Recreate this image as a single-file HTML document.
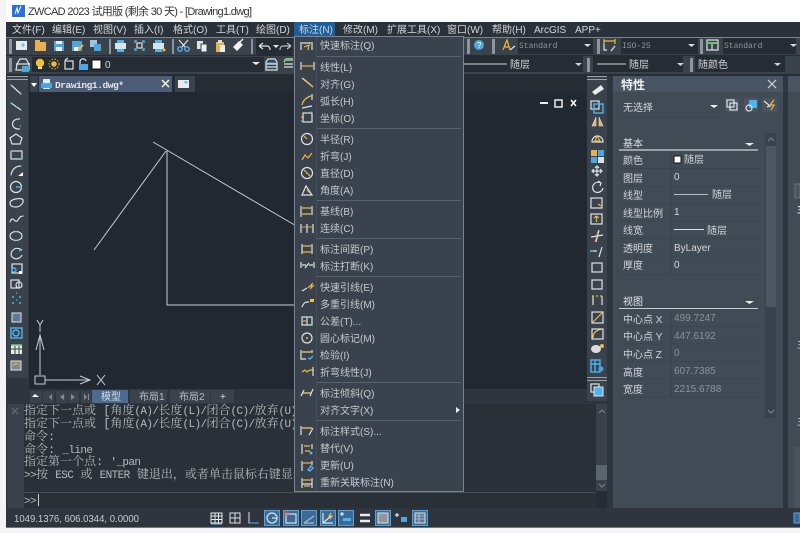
<!DOCTYPE html>
<html><head><meta charset="utf-8"><title>ZWCAD 2023</title>
<style>
html,body{margin:0;padding:0;background:#f4f4f4;overflow:hidden}
svg{display:block;position:absolute;left:0;top:0}
text{font-family:"Liberation Sans","Noto Sans CJK SC",sans-serif;font-size:10px;fill:#d2d6da}
.w{fill:#e8eaec}.m text{fill:#c6cacf}
.mono{font-family:"Liberation Mono","Noto Serif CJK SC",serif;font-size:12px;fill:#b6babe}
.mono tspan{font-size:11px;letter-spacing:-.6px}
.st{font-family:"Liberation Sans",sans-serif;font-size:10px;fill:#c8ccce}
.cb{font-family:"Liberation Mono",serif;font-size:8px;fill:#8f959b}
.dim{fill:#8b9299}
.ic{fill:none;stroke:#dfe3e6;stroke-width:1.2}
.y{fill:none;stroke:#f0b93a;stroke-width:1.2}
.b{fill:none;stroke:#4db4f0;stroke-width:1.4}
.dot{stroke:#353e48;stroke-width:1;stroke-dasharray:1 1}
</style></head><body>
<svg width="800" height="533" viewBox="0 0 800 533" xmlns="http://www.w3.org/2000/svg">
<!-- frame -->
<rect width="800" height="533" fill="#f4f4f4"/>
<rect x="6" y="0" width="794" height="22" fill="#fff"/>
<rect x="6" y="22" width="794" height="506" fill="#2e353f"/>
<rect x="6" y="527" width="794" height="1" fill="#777"/>
<!-- title -->
<rect x="12" y="5" width="13" height="12" fill="#2a6fe0"/>
<path d="M15 14l2-6 1 5 3-7" stroke="#fff" fill="none"/>
<text x="28" y="15" style="font-size:11px;fill:#333" textLength="224">ZWCAD 2023 试用版 (剩余 30 天) - [Drawing1.dwg]</text>
<!-- menu bar -->
<rect x="6" y="22" width="794" height="15" fill="#2b3139"/>
<rect x="294" y="22" width="41" height="15" fill="#1d5f9c"/>
<g>
<text x="12" y="33">文件(F)</text><text x="52" y="33">编辑(E)</text><text x="93" y="33">视图(V)</text><text x="134" y="33">插入(I)</text><text x="173" y="33">格式(O)</text><text x="216" y="33">工具(T)</text><text x="256" y="33">绘图(D)</text><text x="299" y="33">标注(N)</text><text x="343" y="33">修改(M)</text><text x="387" y="33">扩展工具(X)</text><text x="447" y="33">窗口(W)</text><text x="492" y="33">帮助(H)</text><text x="534" y="33">ArcGIS</text><text x="575" y="33">APP+</text>
</g>
<!-- toolbars -->
<rect x="6" y="37" width="794" height="1" fill="#7d858c"/>
<rect x="6" y="38" width="794" height="17" fill="#3a424c"/>
<rect x="6" y="55" width="794" height="1" fill="#262c33"/>
<rect x="6" y="56" width="794" height="18" fill="#3a424c"/>
<rect x="6" y="74" width="794" height="2" fill="#262c33"/>
<g fill="#8e969d">
<rect x="9" y="39" width="3" height="15"/><rect x="9" y="58" width="3" height="14"/>
<rect x="109" y="39" width="2" height="15"/><rect x="172" y="39" width="2" height="15"/><rect x="251" y="39" width="2" height="15"/>
<rect x="467" y="39" width="3" height="15"/><rect x="492" y="39" width="3" height="15"/><rect x="597" y="39" width="3" height="15"/><rect x="700" y="39" width="3" height="15"/>
<rect x="587" y="58" width="3" height="14"/><rect x="690" y="58" width="3" height="14"/>
</g>
<!-- toolbar 1 icons -->
<rect x="16" y="41" width="11" height="9" fill="#e8eaec"/><path d="M21 45h4M23 43v4" stroke="#4db4f0"/>
<rect x="35" y="42" width="11" height="9" fill="#e8b050"/><rect x="35" y="40" width="5" height="3" fill="#e8b050"/>
<rect x="54" y="41" width="10" height="10" fill="#4da6e0"/><rect x="56" y="41" width="6" height="3" fill="#eef"/><rect x="56" y="47" width="6" height="4" fill="#eef"/>
<rect x="72" y="41" width="10" height="10" fill="#4da6e0"/><rect x="74" y="47" width="5" height="4" fill="#eef"/><path d="M78 50l5-5" stroke="#f0b93a" stroke-width="2"/>
<rect x="90" y="40" width="7" height="7" fill="#9fc4de"/><rect x="94" y="44" width="7" height="7" fill="#4da6e0"/>
<rect x="115" y="43" width="11" height="6" fill="#dfe3e6"/><rect x="117" y="40" width="7" height="3" fill="#4db4f0"/><rect x="117" y="49" width="7" height="3" fill="#4db4f0"/>
<path d="M135 43v-2h2M142 41h2v2M144 48v2h-2M137 50h-2v-2" class="b"/><rect x="137" y="43" width="5" height="5" class="ic"/>
<rect x="153" y="43" width="11" height="6" fill="#dfe3e6"/><rect x="155" y="40" width="7" height="3" fill="#4db4f0"/><rect x="155" y="49" width="7" height="3" fill="#4db4f0"/><circle cx="164" cy="50" r="1.5" fill="#f0b93a"/>
<path d="M179 40l6 7M188 40l-6 7" class="ic"/><circle cx="180" cy="49" r="2.2" class="b"/><circle cx="187" cy="49" r="2.2" class="b"/>
<rect x="197" y="41" width="6" height="8" fill="#dfe3e6"/><rect x="201" y="44" width="6" height="8" fill="#eef0f2" stroke="#3a424c"/>
<rect x="216" y="42" width="8" height="10" fill="#e8b050"/><rect x="218" y="40" width="4" height="3" fill="#ddd"/><rect x="220" y="45" width="5" height="7" fill="#eee"/>
<path d="M234 47l5-5 3 3-5 5zM240 42l3-3" fill="#f0f2f4" stroke="#f0f2f4" stroke-width="1.4"/>
<rect x="256" y="38" width="37" height="17" fill="#262c33"/>
<path d="M259 46h8c2 0 3 2 3 4M259 46l4-3M259 46l4 3" class="ic" stroke-width="1.6"/><path d="M273 45h6l-3 3z" fill="#e8eaec"/><path d="M291 46h-8c-2 0-3 2-3 4M291 46l-4-3M291 46l-4 3" class="ic" stroke-width="1.6" opacity=".8"/>
<rect x="464" y="38" width="3" height="17" fill="#3a424c"/>
<circle cx="479" cy="45" r="5" fill="#4da6e0"/><text x="477" y="48" style="font-size:8px;fill:#fff">?</text>
<path d="M503 50l4-10 3 10M505 47h4" class="y"/><path d="M510 50l5-4" class="ic"/>
<rect x="518" y="38" width="75" height="16" fill="#262c33"/><text x="519" y="48" class="cb">Standard</text><path d="M584 44h7l-3.5 3z" fill="#d8dcdf"/>
<path d="M604 41h11M604 39v5M615 39v5" class="y"/><path d="M604 44v6h3M615 46l-4 5" class="ic"/>
<rect x="621" y="38" width="77" height="16" fill="#262c33"/><text x="622" y="48" class="cb">ISO-25</text><path d="M688 44h7l-3.5 3z" fill="#d8dcdf"/>
<rect x="707" y="40" width="11" height="10" class="ic"/><path d="M707 43h11" stroke="#6fc26a" stroke-width="2"/><path d="M712 44v6" class="ic"/>
<rect x="723" y="38" width="73" height="16" fill="#262c33"/><text x="724" y="48" class="cb">Standard</text><path d="M790 44h7l-3.5 3z" fill="#d8dcdf"/>
<!-- toolbar 2 -->
<path d="M16 64h14M17 64l3-5h6l3 5v6H16z" class="ic"/><rect x="22" y="66" width="7" height="6" fill="#4da6e0"/>
<rect x="32" y="57" width="232" height="15" fill="#262c33"/>
<circle cx="40" cy="63" r="4.2" fill="#f5c030"/><rect x="38" y="67" width="4" height="2" fill="#ddd"/>
<circle cx="54" cy="64" r="2.8" fill="#f0b93a"/><circle cx="54" cy="64" r="5" fill="none" stroke="#f0b93a" stroke-dasharray="1.5 1.5"/>
<rect x="65" y="61" width="8" height="8" class="ic"/><path d="M65 60l3-2" class="ic"/>
<rect x="79" y="64" width="9" height="6" fill="#4da6e0"/><path d="M80 64v-2c0-4 5-4 6-1" class="ic"/>
<rect x="92" y="60" width="9" height="9" fill="#fff" stroke="#111"/><text x="105" y="68" style="font-size:10px">0</text>
<path d="M252 62h8l-4 3z" fill="#e8eaec"/>
<path d="M266 62l2-3h7l2 3v8h-11zM266 64h11M266 67h11" class="ic"/><path d="M266 63h11" stroke="#4db4f0"/>
<path d="M284 62l2-3h7" class="ic"/><path d="M284 64h9M284 67h9" class="ic"/><path d="M284 60h9" stroke="#6fc26a" stroke-width="2"/>
<rect x="464" y="56" width="119" height="16" fill="#262c33"/><path d="M464 64h43" stroke="#cfd3d6"/><text x="510" y="68">随层</text><path d="M575 63h7l-3.5 3z" fill="#cfd3d6"/>
<rect x="593" y="56" width="90" height="16" fill="#262c33"/><path d="M597 64h29" stroke="#cfd3d6"/><text x="629" y="68">随层</text><path d="M677 63h7l-3.5 3z" fill="#cfd3d6"/>
<rect x="695" y="56" width="90" height="16" fill="#262c33"/><text x="698" y="68">随颜色</text><path d="M774 63h7l-3.5 3z" fill="#cfd3d6"/>
<!-- doc tabs row -->
<rect x="29" y="76" width="558" height="17" fill="#262c33"/>
<rect x="30" y="76" width="8" height="16" fill="#3a424c"/><path d="M31 83h6l-3 4z" fill="#fff"/>
<rect x="39" y="76" width="133" height="16" fill="#4d5d78"/>
<rect x="43" y="79" width="7" height="10" fill="#e8eaec"/><rect x="41" y="83" width="11" height="5" fill="#4da6e0"/>
<text x="55" y="88" style="font-family:'Liberation Mono',serif;font-size:9.5px;font-weight:bold;fill:#e2e5e8" textLength="69">Drawing1.dwg*</text>
<path d="M162 80l7 7M169 80l-7 7" stroke="#fff" stroke-width="1.4"/>
<rect x="175" y="76" width="20" height="16" fill="#3a424c"/><rect x="178" y="80" width="11" height="8" fill="#e8eaec"/><path d="M184 82h4M186 81v3" stroke="#4db4f0"/>
<!-- canvas -->
<rect x="29" y="92" width="558" height="297" fill="#222831"/>
<g stroke="#c8ccce" fill="none" stroke-width="1">
<path d="M153 142L310 234"/>
<path d="M166 151L94 250"/>
<path d="M167 151V305H297"/>
<path d="M40 375V335M36 350l4-15 4 15"/>
<path d="M45 380H90M80 376l10 4-10 4"/>
<rect x="35" y="376" width="10" height="8"/>
<path d="M37 320l3 5 3-5M40 325v7"/><path d="M97 375l8 10M105 375l-8 10"/>
</g>
<path d="M540 103h8" stroke="#e8eaec" stroke-width="2"/><rect x="555" y="100" width="7" height="7" fill="none" stroke="#e8eaec" stroke-width="1.5"/><path d="M571 100l5 6M576 100l-5 6" stroke="#fff" stroke-width="1.5"/>
<!-- left toolbar -->
<rect x="7" y="76" width="21" height="302" fill="#3a424c"/>
<rect x="7" y="76" width="21" height="1" fill="#9aa1a7"/><rect x="7" y="79" width="21" height="1" fill="#9aa1a7"/>
<rect x="6" y="378" width="23" height="26" fill="#2e353f"/>
<g>
<path d="M11 85L21 94" class="ic"/><path d="M11 85h.1M21 94h.1" class="b" stroke-width="2.5" stroke-linecap="round"/>
<path d="M11 103L21 110" class="ic"/><path d="M11 103h.1M16 107h.1M21 110h.1" class="b" stroke-width="2.5" stroke-linecap="round"/>
<path d="M20 119c-10-1-10 11 0 10" class="ic"/><path d="M20 126h1" class="b"/>
<path d="M16 134l6 4-2 6h-8l-2-6z" class="ic"/>
<rect x="11" y="151" width="11" height="8" class="ic"/><path d="M11 151h.1M22 159h.1" class="b" stroke-width="2.5" stroke-linecap="round"/>
<path d="M11 175c1-6 5-9 10-9" class="ic"/><path d="M11 175h.1M21 166h.1" class="b" stroke-width="2.5" stroke-linecap="round"/><path d="M18 176l5-4v4z" fill="#fff" stroke="none"/>
<circle cx="16" cy="187" r="5.5" class="ic"/><path d="M16 187h6" class="b"/>
<path d="M10 203c0-4 12-6 13-3s-3 7-7 7-6-1-6-4z" class="ic"/>
<path d="M10 222c3-8 5 3 8-2s3-3 5-4" class="ic"/><path d="M10 222h.1M23 216h.1" class="b" stroke-width="2" stroke-linecap="round"/>
<ellipse cx="16" cy="236" rx="6" ry="4.5" class="ic"/><path d="M10 236h.1M22 236h.1M16 231.5h.1M16 240.5h.1" class="b" stroke-width="2" stroke-linecap="round"/>
<path d="M22 250c-8-5-13 3-10 7 3 3 8 2 10-2" class="ic"/><path d="M22 250l-3 1" class="b"/>
<rect x="12" y="264" width="10" height="9" class="ic"/><circle cx="14" cy="270" r="2" class="b"/><rect x="19" y="271" width="3" height="3" fill="#fff" stroke="none"/>
<rect x="11" y="280" width="8" height="8" class="ic"/><circle cx="19" cy="285" r="3" class="ic"/>
<path d="M12 297h2M19 297h2M16 293h1M16 300h1M12 303h2M19 303h2" class="b"/>
<rect x="12" y="313" width="9" height="9" fill="#5f7a96" stroke="#dfe3e6" stroke-width="1"/>
<rect x="11" y="328" width="11" height="10" class="b"/><circle cx="16" cy="333" r="3" class="b"/>
</g>
<rect x="11" y="345" width="11" height="9" fill="#e8eaec"/><path d="M11 345h11" stroke="#6fc26a" stroke-width="1.5"/><path d="M11 349h11M15 346v8M19 346v8" stroke="#3a424c"/>
<rect x="11" y="361" width="10" height="9" fill="#7c8790" stroke="#dfe3e6"/><path d="M13 366l3-3 3 2" stroke="#f0b93a" fill="none"/>
<!-- layout tabs -->
<rect x="29" y="389" width="558" height="15" fill="#2e353f"/>
<rect x="30" y="391" width="12" height="12" fill="#3a424c"/><path d="M32 397l3-3 4 3z" fill="#fff"/>
<g fill="#3a424c"><rect x="43" y="391" width="11" height="12"/><rect x="56" y="391" width="11" height="12"/><rect x="68" y="391" width="11" height="12"/><rect x="81" y="391" width="10" height="12"/></g>
<g fill="#838a90"><path d="M47 394v6M52 394l-3 3 3 3zM64 394l-4 3 4 3zM71 394l4 3-4 3zM84 394l3 3-3 3zM88 394h1v6h-1z"/></g>
<rect x="92" y="390" width="36" height="13" fill="#4d6a90"/><text x="101" y="400" style="fill:#d8dcdf">模型</text>
<rect x="130" y="390" width="37" height="13" fill="#3a424c"/><text x="139" y="400" style="fill:#b9bdc1">布局1</text>
<rect x="170" y="390" width="40" height="13" fill="#3a424c"/><text x="179" y="400" style="fill:#b9bdc1">布局2</text>
<rect x="211" y="390" width="23" height="13" fill="#3a424c"/><text x="220" y="400" style="fill:#d8dcdf">+</text>
<!-- command -->
<rect x="6" y="404" width="590" height="104" fill="#2a3038"/>
<rect x="7" y="404" width="17" height="104" fill="#39424c"/>
<path d="M12 408l6 6M18 408l-6 6" stroke="#5d666e" stroke-width="1.5"/>
<rect x="24" y="492" width="572" height="1" fill="#454e58"/>
<g>
<text class="mono" x="24" y="414">指定下一点或 [角度<tspan>(A)/</tspan>长度<tspan>(L)/</tspan>闭合<tspan>(C)/</tspan>放弃<tspan>(U)</tspan></text>
<text class="mono" x="24" y="427">指定下一点或 [角度<tspan>(A)/</tspan>长度<tspan>(L)/</tspan>闭合<tspan>(C)/</tspan>放弃<tspan>(U)</tspan></text>
<text class="mono" x="24" y="440">命令:</text>
<text class="mono" x="24" y="453">命令: <tspan>_line</tspan></text>
<text class="mono" x="24" y="465">指定第一个点: <tspan>'_pan</tspan></text>
<text class="mono" x="24" y="478"><tspan>&gt;&gt;</tspan>按 <tspan>ESC</tspan> 或 <tspan>ENTER</tspan> 键退出，或者单击鼠标右键显示快捷菜单。</text>
<text class="mono" x="24" y="504"><tspan>&gt;&gt;</tspan></text>
</g>
<rect x="38" y="494" width="1" height="12" fill="#c8ccce"/>
<rect x="596" y="404" width="11" height="87" fill="#39424c"/><rect x="596" y="465" width="11" height="15" fill="#5b656d"/>
<path d="M599 413l3-3 3 3M599 484l3 3 3-3" stroke="#7d858c" fill="none"/>
<rect x="596" y="491" width="11" height="17" fill="#262c33"/>
<!-- right toolbar -->
<rect x="587" y="76" width="20" height="325" fill="#3a424c"/>
<rect x="587" y="76" width="20" height="1" fill="#9aa1a7"/><rect x="587" y="79" width="20" height="1" fill="#9aa1a7"/>
<rect x="587" y="377" width="20" height="1" fill="#9aa1a7"/><rect x="587" y="380" width="20" height="1" fill="#9aa1a7"/>
<g>
<path d="M592 92l9-7 3 4-9 6z" fill="#e8eaec"/>
<rect x="591" y="101" width="8" height="8" class="ic"/><rect x="594" y="104" width="9" height="9" class="b"/>
<path d="M596 117l-4 9h4zM599 117l4 9h-4z" fill="#e8b050" stroke="#dfe3e6" stroke-width=".6"/>
<path d="M592 142c0-8 11-8 11 0z" class="ic"/><path d="M597 136l3 5h-5z" class="y"/>
<rect x="591" y="150" width="6" height="6" fill="#e8b050"/><rect x="598" y="150" width="6" height="6" fill="#4da6e0"/><rect x="591" y="157" width="6" height="6" fill="#4da6e0"/><rect x="598" y="157" width="6" height="6" fill="#dfe3e6"/>
<path d="M597 166v10M592 171h10M595 168l2-2 2 2M595 174l2 2 2-2M594 169l-2 2 2 2M600 169l2 2-2 2" class="ic"/>
<path d="M601 183c-6-3-11 4-7 8 3 3 8 1 9-3M598 181l3 2-1 3" class="ic"/>
<rect x="591" y="198" width="11" height="10" class="ic"/><path d="M598 204l3 2" class="y"/>
<rect x="591" y="214" width="11" height="10" class="ic"/><path d="M596.5 222v-6M594 218l2.5-2 2.500 2" class="y"/>
<path d="M591 237l12-2M599 230l-3 12" class="ic"/><path d="M598 231l-3 11" class="y" opacity=".6"/>
<path d="M590 251h7M602 247l-3 10" class="ic"/><path d="M590 251h3" class="b"/>
<rect x="592" y="263" width="10" height="9" class="ic"/>
<rect x="592" y="280" width="10" height="9" class="ic"/><path d="M594 280h.1M600 280h.1" class="b" stroke-width="2"/>
<path d="M593 305v-9M602 305v-9" class="ic"/><path d="M592 296h11" class="y" stroke-dasharray="2 2"/>
<rect x="592" y="312" width="11" height="11" class="ic"/><path d="M593 322l9-9" class="y"/>
<path d="M593 338c0-5 3-8 9-9" class="y"/><rect x="592" y="329" width="11" height="10" class="ic"/>
<ellipse cx="596" cy="349" rx="5" ry="4" fill="#d8dcdf"/><circle cx="602" cy="346" r="2" fill="#f0b93a"/>
<rect x="591" y="360" width="9" height="12" class="b"/><path d="M591 364h9M595 360v12" class="b" stroke-width="1"/><circle cx="601" cy="369" r="2.5" fill="#4da6e0"/>
<rect x="591" y="384" width="8" height="8" class="ic"/><rect x="594" y="387" width="9" height="9" fill="#4db4f0" stroke="#dfe3e6"/>
</g>
<!-- properties panel -->
<rect x="613" y="76" width="170" height="432" fill="#414b56"/>
<rect x="613" y="76" width="170" height="16" fill="#4a5564"/>
<text x="621" y="89" style="font-size:12px;font-weight:bold;fill:#f0f2f4">特性</text>
<path d="M768 80l8 8M776 80l-8 8" stroke="#d8dcdf" stroke-width="1.1"/>
<text x="623" y="111">无选择</text>
<path d="M710 105h8l-4 3z" fill="#f0f2f4"/>
<rect x="725" y="98" width="14" height="14" fill="#4a5460"/><rect x="727" y="100" width="7" height="7" class="ic"/><rect x="730" y="103" width="7" height="7" class="ic"/>
<rect x="744" y="98" width="14" height="14" fill="#4a5460"/><rect x="749" y="100" width="8" height="8" fill="#4db4f0"/><circle cx="749" cy="108" r="3" class="ic"/>
<rect x="762" y="98" width="15" height="14" fill="#4a5460"/><path d="M764 101l6 5-3 1" class="ic"/><path d="M774 100l-4 5h4l-3 5" class="y"/>
<path d="M620 117H720" class="dot"/>
<text x="623" y="147" style="fill:#dfe3e6">基本</text><path d="M745 143h9l-4.5 3z" fill="#e8eaec"/><rect x="619" y="149" width="139" height="2" fill="#9aa1a7"/>
<g>
<text x="623" y="164">颜色</text><text x="623" y="182">图层</text><text x="623" y="199">线型</text><text x="623" y="217">线型比例</text><text x="623" y="234">线宽</text><text x="623" y="252">透明度</text><text x="623" y="269">厚度</text>
<rect x="674" y="156" width="7" height="7" fill="#fff" stroke="#111"/><text x="684" y="163">随层</text>
<text x="674" y="180">0</text>
<path d="M674 194.5h34" stroke="#b9bdc1"/><text x="712" y="198">随层</text>
<text x="674" y="215">1</text>
<path d="M674 229.5h30" stroke="#dfe3e6"/><text x="707" y="234">随层</text>
<text x="674" y="251">ByLayer</text>
<text x="674" y="268">0</text>
</g>
<path d="M620 168.5h139M620 186h139M620 203.5h139M620 221h139M620 238.5h139M620 256h139M620 274h139" class="dot"/>
<path d="M671 152v122" stroke="#38414a"/>
<text x="623" y="305" style="fill:#dfe3e6">视图</text><path d="M745 301h9l-4.5 3z" fill="#e8eaec"/><rect x="619" y="308" width="139" height="1" fill="#c8ccce"/>
<g>
<text x="623" y="323">中心点 X</text><text x="623" y="340">中心点 Y</text><text x="623" y="358">中心点 Z</text><text x="623" y="376">高度</text><text x="623" y="393">宽度</text>
<text class="dim" x="674" y="321">499.7247</text><text class="dim" x="674" y="339">447.6192</text><text class="dim" x="674" y="356">0</text><text class="dim" x="674" y="374">607.7385</text><text class="dim" x="674" y="392">2215.6788</text>
</g>
<path d="M620 326.5h139M620 344h139M620 361.5h139M620 379h139M620 397h139" class="dot"/>
<path d="M671 310v87" stroke="#38414a"/>
<!-- panel scrollbar -->
<rect x="765" y="133" width="11" height="285" fill="#39424c"/>
<rect x="766" y="146" width="10" height="161" fill="#4d5661"/>
<path d="M768 141l3-3 3 3M768 410l3 3 3-3" stroke="#7d858c" fill="none"/>
<!-- far right panel -->
<rect x="788" y="76" width="12" height="432" fill="#414b56"/>
<rect x="788" y="76" width="12" height="16" fill="#4a5564"/>
<rect x="795" y="447" width="5" height="61" fill="#4a5460"/>
<rect x="795" y="184" width="5" height="14" fill="#4a5460" stroke="#6a727a"/>
<text x="797" y="213" style="font-weight:bold">主</text><text x="797" y="348">主</text><text x="797" y="425">主</text>
<!-- status bar -->
<text class="st" x="14" y="522" textLength="125" lengthAdjust="spacingAndGlyphs">1049.1376, 606.0344, 0.0000</text>
<g>
<path d="M211 513h11v10h-11zM211 516h11M211 519.5h11M215 513v10M218.5 513v10" stroke="#e8eaec" fill="none"/><path d="M211 524h11" stroke="#4db4f0"/>
<path d="M230 513h10v10h-10zM230 518h10M235 513v10" stroke="#dfe3e6" fill="none"/>
<path d="M249 512v11h10" stroke="#dfe3e6" fill="none"/><path d="M249 523h10" stroke="#4db4f0"/>
<g fill="#3d6a94" stroke="#4da6e0"><rect x="264.5" y="510.5" width="15" height="15"/><rect x="283.5" y="510.5" width="15" height="15"/><rect x="301.5" y="510.5" width="15" height="15"/><rect x="320.5" y="510.5" width="15" height="15"/><rect x="338.5" y="510.5" width="15" height="15"/><rect x="375.5" y="510.5" width="15" height="15"/><rect x="412.5" y="510.5" width="15" height="15"/></g>
<circle cx="272" cy="518" r="5" class="ic"/><path d="M272 518h5" class="ic"/>
<rect x="286" y="514" width="10" height="9" class="ic"/><rect x="285" y="512" width="3" height="3" fill="none" stroke="#e05050"/>
<path d="M304 523l10-7M304 523h10" class="ic" opacity=".7"/>
<path d="M323 513v10h10M323 523l8-7" class="ic"/><path d="M331 513l-2 3h3l-2 3" class="y"/>
<path d="M342 512v4M340 514h4" class="ic"/><rect x="343" y="518" width="8" height="3" fill="#4db4f0"/>
<path d="M360 515h10M360 521h10" stroke="#e8eaec" stroke-width="2.5"/>
<rect x="378" y="513" width="10" height="10" fill="#8f969c" stroke="#dfe3e6"/>
<path d="M397 513v4M395 515h4" class="ic"/><rect x="401" y="517" width="6" height="5" fill="#4da6e0"/>
<rect x="415" y="513" width="10" height="10" fill="#5f7a96" stroke="#dfe3e6"/><path d="M415 516h10M415 519h10M419 513v10" stroke="#dfe3e6" stroke-width=".6"/>
<rect x="794" y="513" width="6" height="10" fill="#3d6a94" stroke="#4da6e0"/>
</g>
<!-- dimension menu -->
<g class="m">
<rect x="294.5" y="36.5" width="169" height="455" fill="#3a424d" stroke="#7c848b"/>
<rect x="316" y="37" width="1" height="454" fill="#454e58"/>
<path d="M317 56.500h144M317 128.500h144M317 200.500h144M317 238.500h144M317 276.500h144M317 382.500h144M317 420.500h144" stroke="#59626b"/>
<text x="320" y="49">快速标注(Q)</text>
<text x="320" y="71">线性(L)</text><text x="320" y="88">对齐(G)</text><text x="320" y="105">弧长(H)</text><text x="320" y="122">坐标(O)</text>
<text x="320" y="143">半径(R)</text><text x="320" y="160">折弯(J)</text><text x="320" y="177">直径(D)</text><text x="320" y="194">角度(A)</text>
<text x="320" y="215">基线(B)</text><text x="320" y="232">连续(C)</text>
<text x="320" y="253">标注间距(P)</text><text x="320" y="270">标注打断(K)</text>
<text x="320" y="291">快速引线(E)</text><text x="320" y="308">多重引线(M)</text><text x="320" y="325">公差(T)...</text><text x="320" y="342">圆心标记(M)</text><text x="320" y="359">检验(I)</text><text x="320" y="376">折弯线性(J)</text>
<text x="320" y="397">标注倾斜(Q)</text><text x="320" y="414">对齐文字(X)</text>
<text x="320" y="435">标注样式(S)...</text><text x="320" y="452">替代(V)</text><text x="320" y="469">更新(U)</text><text x="320" y="486">重新关联标注(N)</text>
<path d="M456 407l4 3-4 3z" fill="#e8eaec"/>
</g>
<!-- menu icons -->
<g>
<path d="M301 42v8M312 42v8M302 43h9" class="ic"/><path d="M304 47l5-2-1 5" class="y"/>
<path d="M301 62v8M314 62v8" class="ic"/><path d="M302 66h11" class="y"/>
<path d="M302 78l11 9" class="ic"/><path d="M304 79l9 8" class="y" opacity=".8"/>
<path d="M302 105c1-5 5-8 9-9" class="y"/><path d="M302 108l10-2M312 94v6" class="ic"/>
<rect x="303" y="113" width="9" height="9" class="ic"/><path d="M301 117h3" class="y"/><path d="M310 112h1M301 121h1" class="b"/>
<circle cx="307" cy="139" r="5.5" class="ic"/><path d="M304 136l3 3" class="y"/>
<path d="M302 160l3-5 3 3 4-5" class="y"/>
<circle cx="307" cy="173" r="5.5" class="ic"/><path d="M303 169l8 8" class="y"/>
<path d="M302 195l4-9 6 9z" class="ic"/><path d="M307 190l3 3" class="y"/>
<path d="M301 206v11M312 206v9" class="ic"/><path d="M302 208h9M302 214h9" class="y"/>
<path d="M301 224v9M307 224v9M313 224v9" class="ic"/><path d="M302 227h11" class="y" opacity=".7"/>
<path d="M302 244v10M312 244v10" class="ic"/><path d="M302 246h9M302 252h9" class="y"/>
<path d="M301 262v6M314 262v6M302 265h4M309 265h4M305 268l4-5" class="ic"/>
<path d="M302 291l5-3" class="ic"/><path d="M308 288l4-4-1 4 3-3" class="y"/>
<path d="M302 307c1-3 3-5 5-5h2" class="ic"/><rect x="310" y="299" width="4" height="3" fill="#f0c040"/>
<rect x="302" y="317" width="10" height="8" class="ic"/><path d="M307 317v8" class="ic"/><path d="M303 321h3" class="y"/>
<circle cx="307" cy="338" r="5" class="ic"/><circle cx="307" cy="338" r="1" fill="#f0b93a"/>
<path d="M301 350v9h5M312 350v3M302 352h9" class="ic"/><path d="M302 352h9" class="y"/><path d="M308 358l2 1 3-3" class="b"/>
<path d="M302 372l3-2 2 2 3-2h3" class="y"/><path d="M313 367v9" class="ic"/>
<path d="M301 396l3-6M313 389l-3 7M303 393h8" class="ic"/><path d="M303 393h8" class="y"/>
<path d="M301 426v9M313 428l-4 7M302 428h10" class="ic"/><path d="M302 428h10" class="y"/>
<path d="M302 444v10M312 444v5" class="ic"/><path d="M304 446h6M305 451h5" class="y"/><circle cx="311" cy="453" r="1.5" fill="#4db4f0"/>
<path d="M302 461v10M312 461v4" class="ic"/><path d="M303 463h9" class="y"/><path d="M308 470l3-4 2 2-3 3z" class="b"/>
<path d="M302 478v10M312 478v10M302 484h10" class="ic"/><path d="M303 480h8M304 486h6" class="y"/>
</g>
</svg>
</body></html>
